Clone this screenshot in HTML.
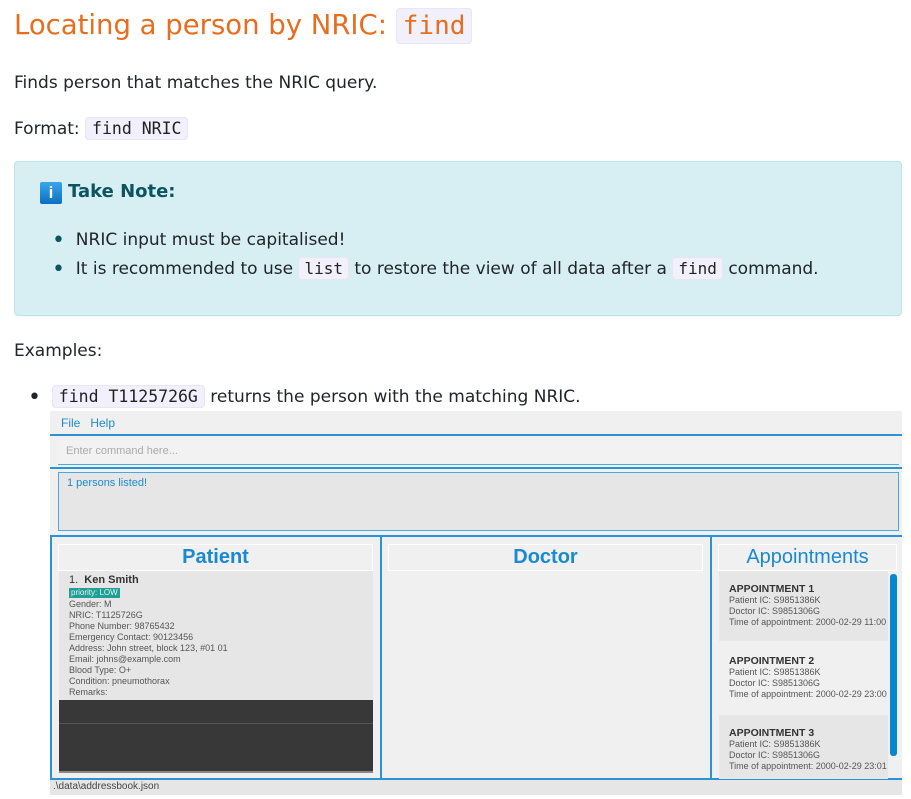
<!DOCTYPE html>
<html><head><meta charset="utf-8"><style>
body{margin:0;width:911px;height:799px;background:#fff;position:relative;overflow:hidden;font-family:"Segoe UI","DejaVu Sans","Liberation Sans",sans-serif;color:#212529}
.a{position:absolute;white-space:nowrap}
code{font-family:"DejaVu Sans Mono","Liberation Mono",monospace;background:#f2f0fc;border:1px solid #e8e6f5;border-radius:4px;padding:1px 5px;color:#222}
.s{font-family:"Liberation Sans",Arial,sans-serif}
.g{color:#555;font-size:9px;line-height:11px}
.b{font-size:22px;color:#0c5460;vertical-align:-2px}
</style></head><body>
<div class="a" style="left:14px;top:5px;font-size:27.5px;color:#e76e1e;line-height:40px">Locating a person by NRIC: <code style="color:#e76e1e;font-size:26px;padding:2px 6px">find</code></div>
<div class="a" style="left:14px;top:71px;font-size:17px;line-height:24px">Finds person that matches the NRIC query.</div>
<div class="a" style="left:14px;top:117px;font-size:17px;line-height:24px">Format: <code style="font-size:16.5px;padding:1px 6px">find NRIC</code></div>
<div class="a" style="left:14px;top:161px;width:886px;height:153px;background:#d7eef3;border:1px solid #bfe3ea;border-radius:4px"></div>
<div class="a" style="left:40px;top:182px;width:22px;height:22px;background:linear-gradient(#3aa6ea,#0b6fc0);border-radius:2px;color:#fff;font:bold 17px 'Liberation Sans';text-align:center;line-height:22px">i</div>
<div class="a" style="left:68px;top:180px;font-size:18px;font-weight:bold;color:#0c5460;line-height:24px">Take Note:</div>
<div class="a" style="left:52px;top:228px;font-size:17px;line-height:24px"><span class="b">•</span>&nbsp;&nbsp;NRIC input must be capitalised!</div>
<div class="a" style="left:52px;top:257px;font-size:17px;line-height:24px"><span class="b">•</span>&nbsp;&nbsp;It is recommended to use <code style="font-size:16px">list</code> to restore the view of all data after a <code style="font-size:16px">find</code> command.</div>
<div class="a" style="left:14px;top:339px;font-size:17px;line-height:24px">Examples:</div>
<div class="a" style="left:28px;top:385px;font-size:17px;line-height:24px"><span class="b" style="color:#212529">•</span>&nbsp;&nbsp;<code style="font-size:16.5px;padding:1px 6px">find T1125726G</code> returns the person with the matching NRIC.</div>

<div class="a s" style="left:50px;top:411px;width:852px;height:384px;background:#f0f0f0">
 <div class="a" style="left:11px;top:5px;font-size:12px;color:#1a8ad0">File&nbsp;&nbsp;&nbsp;Help</div>
 <div class="a" style="left:0;top:23px;width:852px;height:2px;background:#2a93d5"></div>
 <div class="a" style="left:8px;top:29px;width:841px;height:24px;border-bottom:1px solid #4aa8e0;background:#f2f2f2"></div>
 <div class="a" style="left:16px;top:34px;font-size:11px;color:#aaa">Enter command here...</div>
 <div class="a" style="left:0;top:56px;width:852px;height:2px;background:#2a93d5"></div>
 <div class="a" style="left:8px;top:61px;width:839px;height:57px;border:1px solid #4aa8e0;background:#e6e6e6"></div>
 <div class="a" style="left:17px;top:66px;font-size:11px;color:#1a8ad0">1 persons listed!</div>
 <div class="a" style="left:0;top:124px;width:852px;height:2px;background:#2a93d5"></div>
 <div class="a" style="left:0;top:124px;width:2px;height:244px;background:#2a93d5"></div>
 <div class="a" style="left:330px;top:124px;width:2px;height:244px;background:#2a93d5"></div>
 <div class="a" style="left:660px;top:124px;width:2px;height:244px;background:#2a93d5"></div>
 <div class="a" style="left:0;top:367px;width:852px;height:2px;background:#2a93d5"></div>
 <div class="a" style="left:8px;top:133px;width:313px;height:25px;border:1px solid #fff;text-align:center;font:bold 20px 'Liberation Sans';color:#1a8ad0;line-height:25px">Patient</div>
 <div class="a" style="left:338px;top:133px;width:313px;height:25px;border:1px solid #fff;text-align:center;font:bold 20px 'Liberation Sans';color:#1a8ad0;line-height:25px">Doctor</div>
 <div class="a" style="left:668px;top:133px;width:177px;height:25px;border:1px solid #fff;text-align:center;font:20px 'Liberation Sans';color:#1a8ad0;line-height:25px">Appointments</div>
 <div class="a" style="left:9px;top:160px;width:314px;height:129px;background:#e6e6e6"></div>
 <div class="a" style="left:19px;top:163px;font-size:11px;color:#333">1.&nbsp;&nbsp;<b>Ken Smith</b></div>
 <div class="a" style="left:19px;top:177px;font-size:8px;background:#1fa096;color:#eee;padding:0 2px;line-height:10px">priority: LOW</div>
 <div class="a g" style="left:19px;top:188px">Gender: M<br>NRIC: T1125726G<br>Phone Number: 98765432<br>Emergency Contact: 90123456<br>Address: John street, block 123, #01 01<br>Email: johns@example.com<br>Blood Type: O+<br>Condition: pneumothorax<br>Remarks:</div>
 <div class="a" style="left:9px;top:289px;width:314px;height:71px;background:#383838;border-bottom:2px solid #888"></div>
 <div class="a" style="left:9px;top:312px;width:314px;height:1px;background:#555"></div>
 <div class="a" style="left:669px;top:160px;width:169px;height:70px;background:#e6e6e6"></div>
 <div class="a" style="left:669px;top:304px;width:169px;height:64px;background:#e6e6e6"></div>
 <div class="a g" style="left:679px;top:173px"><b style="font-size:10.5px;color:#333">APPOINTMENT 1</b><br>Patient IC: S9851386K<br>Doctor IC: S9851306G<br>Time of appointment: 2000-02-29 11:00</div>
 <div class="a g" style="left:679px;top:245px"><b style="font-size:10.5px;color:#333">APPOINTMENT 2</b><br>Patient IC: S9851386K<br>Doctor IC: S9851306G<br>Time of appointment: 2000-02-29 23:00</div>
 <div class="a g" style="left:679px;top:317px;height:45px;overflow:hidden"><b style="font-size:10.5px;color:#333">APPOINTMENT 3</b><br>Patient IC: S9851386K<br>Doctor IC: S9851306G<br>Time of appointment: 2000-02-29 23:01</div>
 <div class="a" style="left:840px;top:163px;width:7px;height:182px;background:#0a86cc;border-radius:3px"></div>
 <div class="a" style="left:0;top:369px;width:852px;height:15px;background:#e6e6e6"></div>
 <div class="a" style="left:3px;top:370px;font-size:10px;color:#444">.\data\addressbook.json</div>
</div>
</body></html>
